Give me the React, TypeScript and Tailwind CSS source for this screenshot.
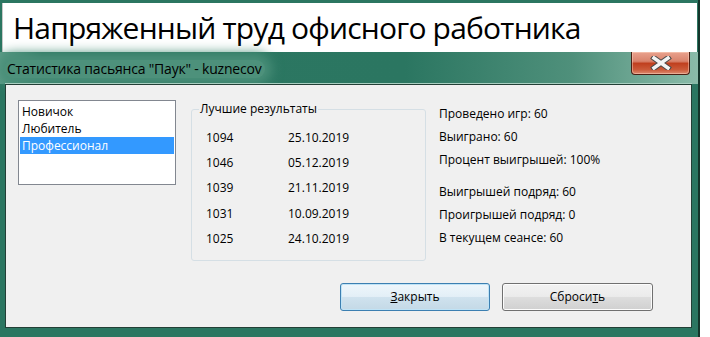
import { useState } from "react";

const FONT = "font-['Open_Sans','Noto_Sans',sans-serif]";

const levels = ["Новичок", "Любитель", "Профессионал"];

const bestResults = [
  { score: 1094, date: "25.10.2019" },
  { score: 1046, date: "05.12.2019" },
  { score: 1039, date: "21.11.2019" },
  { score: 1031, date: "10.09.2019" },
  { score: 1025, date: "24.10.2019" },
];

const statsTop = ["Проведено игр: 60", "Выиграно: 60", "Процент выигрышей: 100%"];
const statsBottom = ["Выигрышей подряд: 60", "Проигрышей подряд: 0", "В текущем сеансе: 60"];

function CloseGlyph() {
  return (
    <svg width="22" height="14" viewBox="0 0 22 14">
      <path
        d="M4 2 L18 12 M18 2 L4 12"
        stroke="#4a4a4a"
        strokeWidth="5.5"
        strokeLinecap="square"
      />
      <path
        d="M4 2 L18 12 M18 2 L4 12"
        stroke="#f4f4f4"
        strokeWidth="3.5"
        strokeLinecap="square"
      />
    </svg>
  );
}

export default function App() {
  const [selected, setSelected] = useState(2);

  return (
    <div className={`w-[710px] h-[337px] bg-white overflow-hidden ${FONT}`}>
      <div className="w-[700px] h-[337px] bg-[#2b7661] border-r-2 border-[#15352b] flex flex-col">
        <div className="mx-[2px] mt-[3px] w-[695px] h-[49px] bg-white border-l border-[#c8c8c8] flex items-center pl-[10px]">
          <span className="text-[30px] leading-none text-black tracking-[-0.8px]">
            Напряженный труд офисного работника
          </span>
        </div>

        <div className="h-[32px] flex items-start justify-between bg-[linear-gradient(90deg,#5d9c87_0%,#2c7762_6%,#2b7661_58%,#4f907b_82%,#8abba9_100%)]">
          <span className="mt-[8px] ml-[4px] px-[3px] text-[14px] leading-[18px] text-black rounded-full bg-[#4d917b] shadow-[0_0_12px_7px_#4a8f79] tracking-[-0.2px]">
            Статистика пасьянса "Паук" - kuznecov
          </span>
          <button className="mr-[8px] w-[59px] h-[23px] flex items-center justify-center rounded-b-[4px] border border-t-0 border-[#4a1f14] bg-[linear-gradient(180deg,#e9a28e_0%,#d9836c_42%,#c0401f_52%,#cb5a39_80%,#dc8a70_100%)] shadow-[inset_0_0_0_1px_rgba(255,220,200,0.45)]">
            <CloseGlyph />
          </button>
        </div>

        <div className="ml-[5px] w-[687px] h-[244px] border border-[#233f36] shadow-[0_-1px_0_#a9cfc1] bg-[#f0f0f0] flex flex-col text-[12px] text-black">
          <div className="flex items-start pl-[12px] pt-[15px]">
            <div className="w-[158px] h-[85px] bg-white border border-[#828790] px-[1px] pt-[2px]">
              {levels.map((level, i) => (
                <div
                  key={level}
                  onClick={() => setSelected(i)}
                  className={
                    i === selected
                      ? "h-[17px] px-[2px] leading-[17px] bg-[#3399ff] text-white"
                      : "h-[17px] px-[2px] leading-[17px]"
                  }
                >
                  {level}
                </div>
              ))}
            </div>

            <fieldset className="ml-[15px] mt-[1px] w-[235px] h-[160px] border border-[#d5dfe5] rounded-[3px] pl-[14px]">
              <legend className="ml-[-7px] px-[1px] leading-[16px]">Лучшие результаты</legend>
              <div className="pt-[8px]">
                {bestResults.map((row) => (
                  <div key={row.score} className="h-[25.3px] flex items-center">
                    <span className="w-[82px]">{row.score}</span>
                    <span>{row.date}</span>
                  </div>
                ))}
              </div>
            </fieldset>

            <div className="ml-[13px] mt-[2px] flex flex-col">
              {statsTop.map((s) => (
                <div key={s} className="h-[23px] flex items-center">{s}</div>
              ))}
              <div className="h-[9px]" />
              {statsBottom.map((s) => (
                <div key={s} className="h-[23px] flex items-center">{s}</div>
              ))}
            </div>
          </div>

          <div className="flex justify-end gap-[12px] pr-[38px] mt-[22px]">
            <button className="w-[150px] h-[28px] rounded-[3px] border border-[#3c7fb1] bg-[linear-gradient(180deg,#eef6fb_0%,#e3eff7_48%,#cfe2ee_52%,#c4d9e6_100%)] shadow-[inset_0_0_0_1px_#bfe3f6]">
              <u>З</u>акрыть
            </button>
            <button className="w-[151px] h-[28px] rounded-[3px] border border-[#707070] bg-[linear-gradient(180deg,#f2f2f2_0%,#ebebeb_48%,#dddddd_52%,#d0d0d0_100%)] shadow-[inset_0_0_0_1px_#fcfcfc]">
              Сброси<u>т</u>ь
            </button>
          </div>
        </div>
      </div>
    </div>
  );
}
